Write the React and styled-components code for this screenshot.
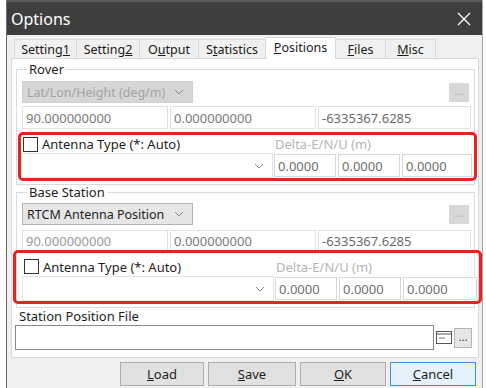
import React from "react";
import styled, { createGlobalStyle } from "styled-components";

const GlobalStyle = createGlobalStyle`
  html, body {
    margin: 0;
    padding: 0;
    background: #ffffff;
    font-family: "Noto Sans", "Segoe UI", sans-serif;
    font-size: 13px;
    color: #1e1e1e;
  }
`;

const Screen = styled.div`
  display: flex;
  width: 486px;
  height: 388px;
  padding-left: 6px;
  box-sizing: border-box;
  overflow: hidden;
`;

const Window = styled.div`
  width: 477px;
  display: flex;
  flex-direction: column;
  background: #f0f0f0;
  border-left: 1px solid #6a6a6a;
  border-right: 1px solid #a8a8a8;
  box-sizing: border-box;
`;

const TitleBar = styled.div`
  height: 35px;
  flex: none;
  background: #3e3e3e;
  border-top: 2px solid #5a5a5a;
  box-sizing: border-box;
  display: flex;
  align-items: center;
  justify-content: space-between;
  padding: 0 11px 0 4px;
  color: #ffffff;
  font-size: 16px;
`;

const Body = styled.div`
  flex: 1;
  display: flex;
  flex-direction: column;
  padding: 0 3px 0 4px;
`;

const TabRow = styled.div`
  height: 23px;
  display: flex;
  align-items: flex-end;
  padding-left: 4px;
`;

const Tab = styled.div`
  height: ${({ active }) => (active ? "22px" : "19px")};
  width: ${({ w }) => w}px;
  box-sizing: border-box;
  border: 1px solid #d9d9d9;
  border-bottom: none;
  margin-left: -1px;
  background: ${({ active }) => (active ? "#ffffff" : "#f0f0f0")};
  display: flex;
  align-items: ${({ active }) => (active ? "flex-start" : "center")};
  padding-top: ${({ active }) => (active ? "1px" : "0")};
  justify-content: center;
  font-size: 12.5px;
  color: #1a1a1a;
  position: relative;
  z-index: ${({ active }) => (active ? 1 : 0)};
  margin-bottom: ${({ active }) => (active ? "-1px" : "0")};
`;

const TabPage = styled.div`
  height: 300px;
  box-sizing: border-box;
  border: 1px solid #d9d9d9;
  background: #ffffff;
  display: flex;
  flex-direction: column;
  padding: 0 3px 0 3px;
`;

const Group = styled.fieldset`
  margin: ${({ top }) => top}px 0 0 1px;
  width: 459px;
  box-sizing: border-box;
  border: 1px solid #dcdcdc;
  padding: 0 3px 3px 5px;
  display: flex;
  flex-direction: column;
  min-width: 0;
`;

const Legend = styled.legend`
  padding: 0 2px;
  margin-left: 5px;
  font-size: 13px;
  color: #1e1e1e;
  line-height: 15px;
`;

const Row = styled.div`
  display: flex;
  align-items: center;
  gap: ${({ gap }) => gap || 0}px;
  margin-top: ${({ top }) => top || 0}px;
`;

const Spacer = styled.div`
  flex: 1;
`;

const Combo = styled.div`
  width: ${({ w }) => w}px;
  height: ${({ h }) => h || 22}px;
  box-sizing: border-box;
  display: flex;
  align-items: center;
  justify-content: space-between;
  padding: 0 8px 0 4px;
  font-size: 12.5px;
  background: ${({ disabled, plain }) =>
    plain ? "#ffffff" : disabled ? "#d6d6d6" : "#e6e6e6"};
  border: 1px solid
    ${({ disabled, plain }) =>
      plain ? "#e4e4e4" : disabled ? "#cfcfcf" : "#b4b4b4"};
  color: ${({ disabled }) => (disabled ? "#a4a4a4" : "#1e1e1e")};
  white-space: nowrap;
`;

const Chevron = () => (
  <svg width="10" height="6" viewBox="0 0 10 6">
    <path d="M1 1 L5 5 L9 1" fill="none" stroke="#8a8a8a" strokeWidth="1" />
  </svg>
);

const Dots = styled.div`
  width: ${({ w }) => w || 20}px;
  height: ${({ h }) => h || 19}px;
  box-sizing: border-box;
  background: ${({ disabled }) => (disabled ? "#d8d8d8" : "#e6e6e6")};
  border: 1px solid ${({ disabled }) => (disabled ? "#d8d8d8" : "#b4b4b4")};
  color: ${({ disabled }) => (disabled ? "#a6a6a6" : "#333")};
  display: flex;
  align-items: center;
  justify-content: center;
  font-size: 11px;
  line-height: 1;
  padding-bottom: 3px;
  margin-right: ${({ mr }) => mr || 0}px;
`;

const Edit = styled.div`
  width: ${({ w }) => (w ? `${w}px` : "auto")};
  flex: ${({ w }) => (w ? "none" : 1)};
  height: ${({ h }) => h || 23}px;
  box-sizing: border-box;
  border: 1px solid ${({ dark }) => (dark ? "#8a8a8a" : "#e0e0e0")};
  background: #ffffff;
  display: flex;
  align-items: center;
  padding-left: 3px;
  font-size: 13px;
  color: ${({ tone }) => tone || "#7a7a7a"};
  white-space: nowrap;
  overflow: hidden;
`;

const RedBox = styled.div`
  margin: ${({ m }) => m};
  border: 3px solid #e8231f;
  border-radius: 5px;
  padding: ${({ p }) => p};
  display: grid;
  grid-template-columns: 253px 64px 64px 1fr;
  grid-template-rows: ${({ rows }) => rows};
  align-items: center;
`;

const CheckLine = styled.label`
  display: flex;
  align-items: center;
  gap: 4px;
  font-size: 13px;
  color: #1e1e1e;
  padding-left: 2px;
  white-space: nowrap;
`;

const Box = styled.span`
  width: 15px;
  height: 15px;
  box-sizing: border-box;
  border: 1px solid #333;
  background: #fff;
`;

const Dim = styled.div`
  grid-column: 2 / span 3;
  font-size: 13px;
  color: #b5b5b5;
  padding-left: 1px;
`;

const Cell = styled(Edit)`
  height: 23px;
  margin-right: 2px;
  color: #6e6e6e;
  border-color: #d8d8d8;
`;

const Label = styled.div`
  font-size: 13px;
  line-height: 17px;
  margin: ${({ m }) => m};
  color: #1e1e1e;
`;

const FileIcon = () => (
  <svg width="16" height="13" viewBox="0 0 16 13">
    <rect x="0.5" y="0.5" width="15" height="12" fill="#fff" stroke="#555" />
    <line x1="0.5" y1="3" x2="15.5" y2="3" stroke="#555" />
    <line x1="3" y1="7" x2="9" y2="7" stroke="#777" />
  </svg>
);

const Buttons = styled.div`
  display: flex;
  gap: 4px;
  padding: 4px 0 0 109px;
`;

const Button = styled.div`
  width: ${({ w }) => w || 84}px;
  height: 24px;
  box-sizing: border-box;
  border: 1px solid ${({ focus }) => (focus ? "#3c8ee0" : "#adadad")};
  background: ${({ focus }) => (focus ? "#e5f1fb" : "#e1e1e1")};
  display: flex;
  align-items: center;
  justify-content: center;
  font-size: 13px;
  color: #1e1e1e;
`;

const tabs = [
  { key: "s1", w: 63, label: <>Setting<u>1</u></> },
  { key: "s2", w: 64, label: <>Setting<u>2</u></> },
  { key: "o", w: 60, label: <>O<u>u</u>tput</> },
  { key: "st", w: 68, label: <>S<u>t</u>atistics</> },
  { key: "p", w: 71, label: <><u>P</u>ositions</>, active: true },
  { key: "f", w: 51, label: <><u>F</u>iles</> },
  { key: "m", w: 51, label: <><u>M</u>isc</> },
];

function AntennaBlock({ m, p, rows }) {
  return (
    <RedBox m={m} p={p} rows={rows}>
      <CheckLine>
        <Box />
        Antenna Type (*: Auto)
      </CheckLine>
      <Dim>Delta-E/N/U (m)</Dim>
      <Combo w={252} h={25} plain>
        <span />
        <Chevron />
      </Combo>
      <Cell>0.0000</Cell>
      <Cell>0.0000</Cell>
      <Cell>0.0000</Cell>
    </RedBox>
  );
}

export default function App() {
  return (
    <>
      <GlobalStyle />
      <Screen>
        <Window>
          <TitleBar>
            <span>Options</span>
            <svg width="14" height="14" viewBox="0 0 14 14">
              <path d="M1 1 L13 13 M13 1 L1 13" stroke="#fff" strokeWidth="1.3" />
            </svg>
          </TitleBar>
          <Body>
            <TabRow>
              {tabs.map((t) => (
                <Tab key={t.key} w={t.w} active={t.active}>
                  {t.label}
                </Tab>
              ))}
            </TabRow>
            <TabPage>
              <Group top={3}>
                <Legend>Rover</Legend>
                <Row top={4}>
                  <Combo w={171} disabled>
                    <span>Lat/Lon/Height (deg/m)</span>
                    <Chevron />
                  </Combo>
                  <Spacer />
                  <Dots disabled mr={2}>...</Dots>
                </Row>
                <Row top={3} gap={2}>
                  <Edit w={146}>90.000000000</Edit>
                  <Edit w={146}>0.000000000</Edit>
                  <Edit tone="#6a6a6a">-6335367.6285</Edit>
                </Row>
                <AntennaBlock m="3px -6px 0 -4px" p="0" rows="18px 25px" />
              </Group>
              <Group top={0}>
                <Legend>Base Station</Legend>
                <Row top={3}>
                  <Combo w={171}>
                    <span>RTCM Antenna Position</span>
                    <Chevron />
                  </Combo>
                  <Spacer />
                  <Dots disabled mr={2}>...</Dots>
                </Row>
                <Row top={5} gap={2}>
                  <Edit w={146} h={22} tone="#9a9a9a">90.000000000</Edit>
                  <Edit w={146} h={22}>0.000000000</Edit>
                  <Edit h={22} tone="#6a6a6a">-6335367.6285</Edit>
                </Row>
                <AntennaBlock m="-2px -11px 0 -9px" p="4px 0 0 6px" rows="19px 25px" />
              </Group>
              <Label m="0 0 0 4px">Station Position File</Label>
              <Row top={0}>
                <Edit w={419} h={25} dark />
                <Spacer />
                <FileIcon />
                <Spacer />
                <Dots w={18} h={20} mr={3}>...</Dots>
              </Row>
            </TabPage>
            <Buttons>
              <Button><span><u>L</u>oad</span></Button>
              <Button w={88}><span><u>S</u>ave</span></Button>
              <Button w={86}><span><u>O</u>K</span></Button>
              <Button w={86} focus><span><u>C</u>ancel</span></Button>
            </Buttons>
          </Body>
        </Window>
      </Screen>
    </>
  );
}
